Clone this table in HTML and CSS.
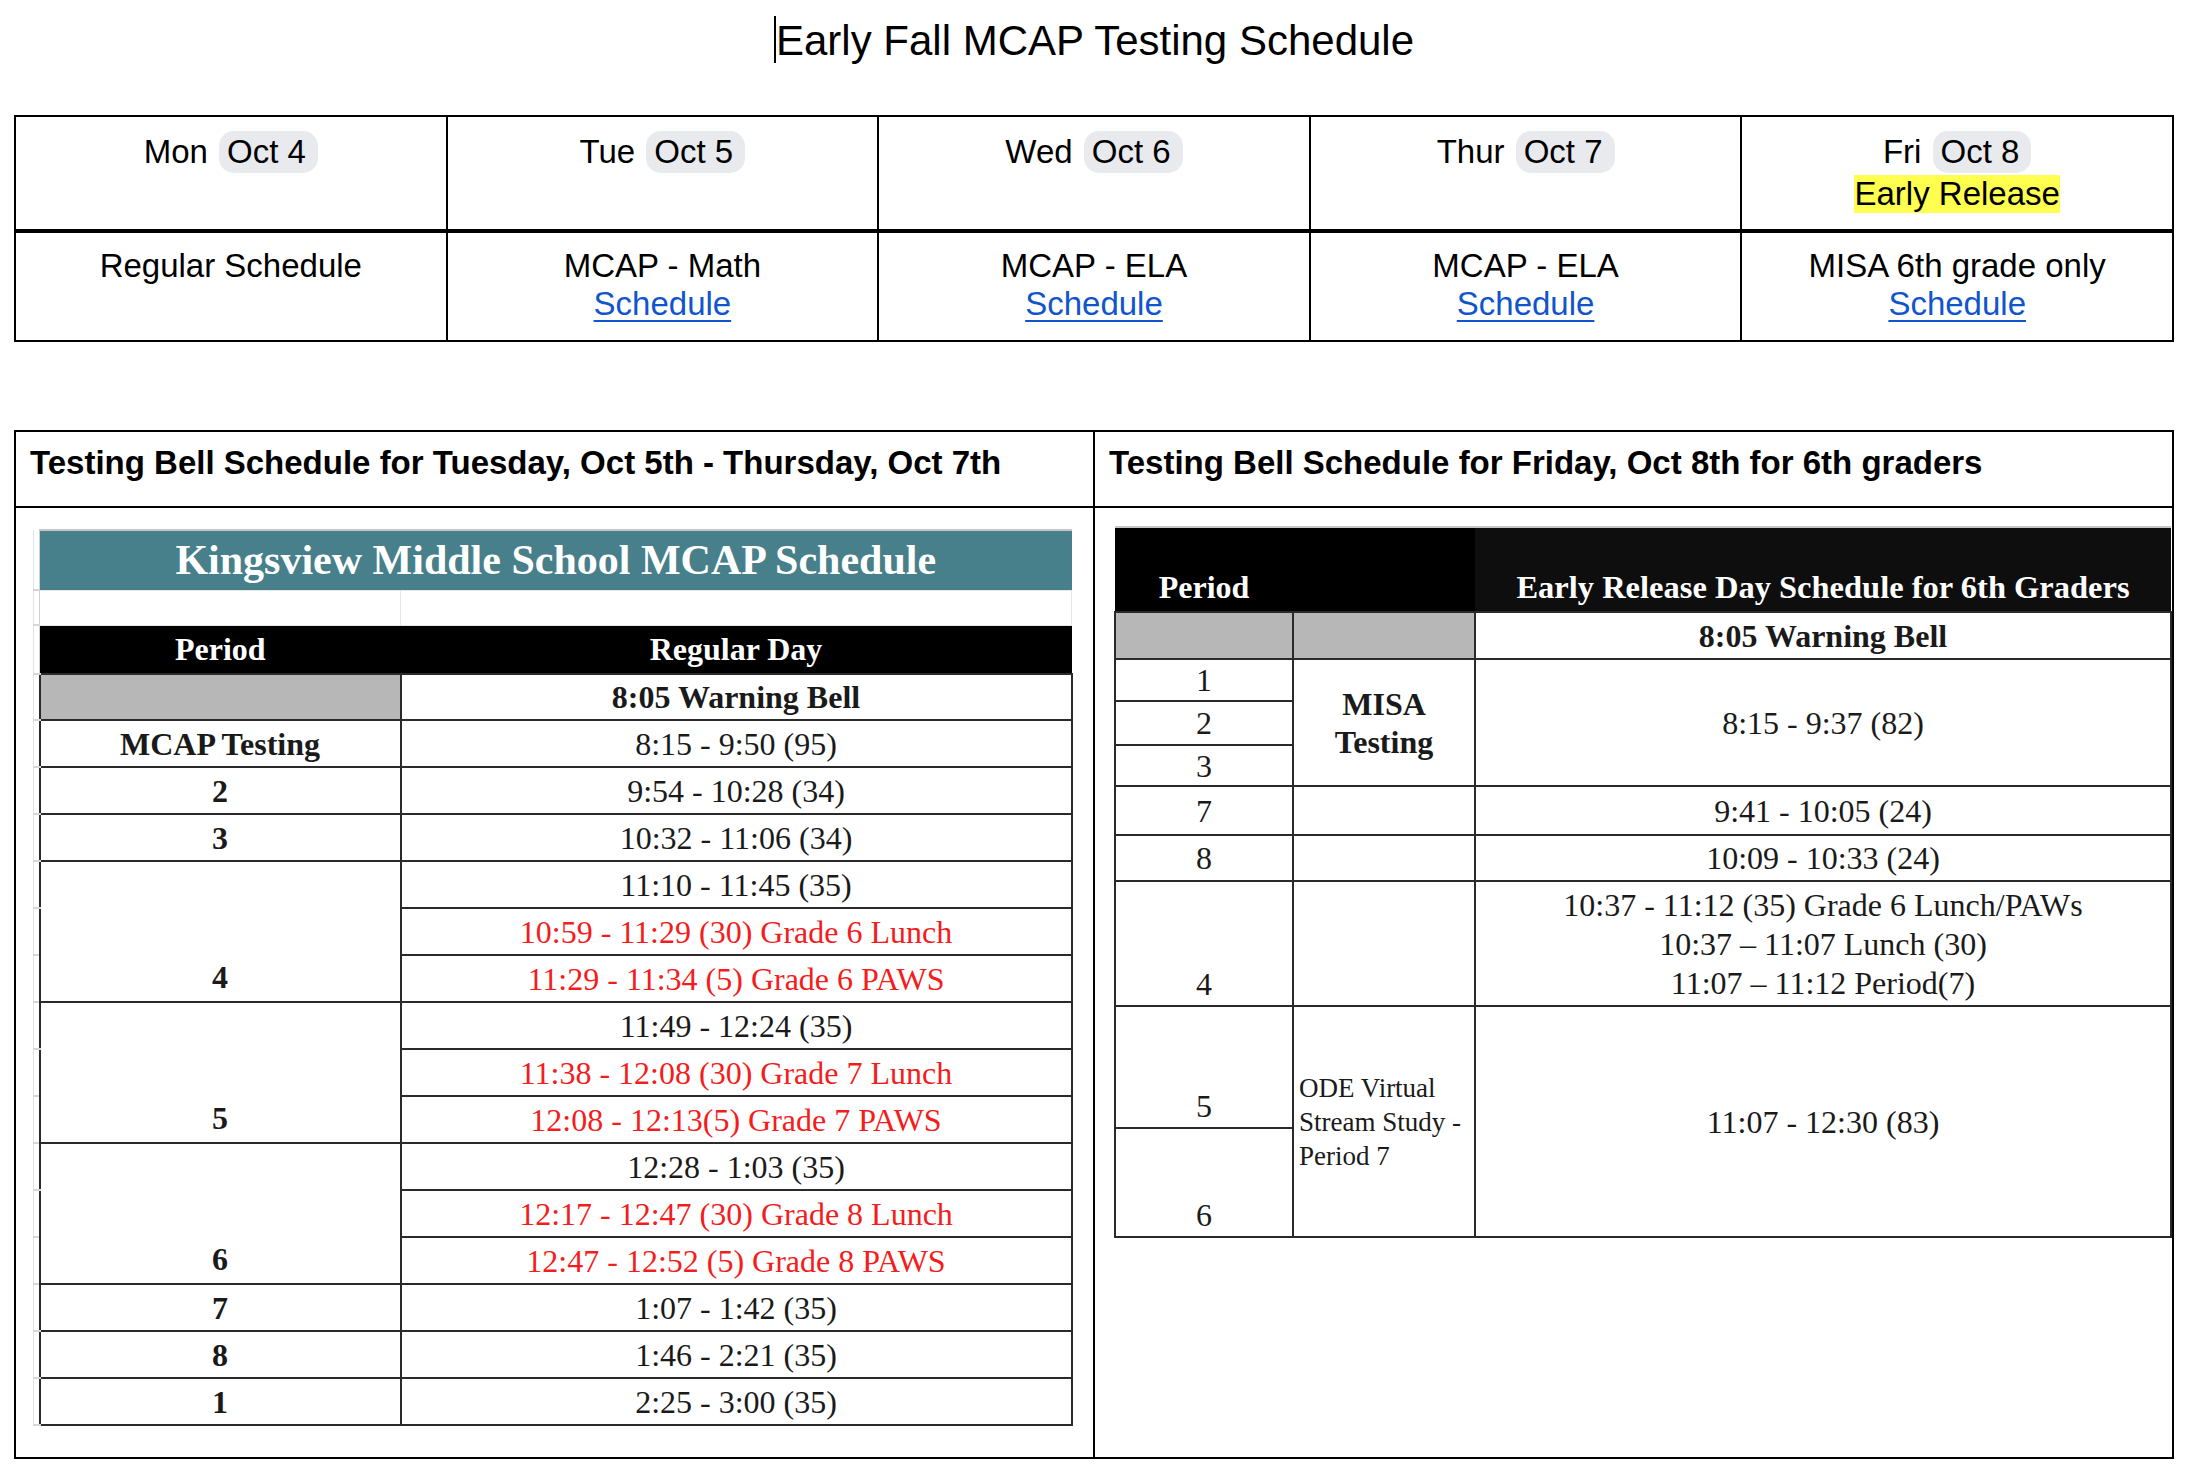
FILE: index.html
```html
<!DOCTYPE html>
<html lang="en">
<head>
<meta charset="utf-8">
<title>Early Fall MCAP Testing Schedule</title>
<link rel="stylesheet" href="styles.css">
</head>
<body>
<div class="page">
  <h1 class="title"><span class="cursor"></span>Early Fall MCAP Testing Schedule</h1>

  <table class="week">
    <colgroup><col><col><col><col><col></colgroup>
    <tr class="days">
      <td>Mon <span class="chip">Oct 4</span></td>
      <td>Tue <span class="chip">Oct 5</span></td>
      <td>Wed <span class="chip">Oct 6</span></td>
      <td>Thur <span class="chip">Oct 7</span></td>
      <td>Fri <span class="chip">Oct 8</span><br><span class="hl">Early Release</span></td>
    </tr>
    <tr class="plans">
      <td>Regular Schedule</td>
      <td>MCAP - Math<br><a href="#" class="link">Schedule</a></td>
      <td>MCAP - ELA<br><a href="#" class="link">Schedule</a></td>
      <td>MCAP - ELA<br><a href="#" class="link">Schedule</a></td>
      <td>MISA 6th grade only<br><a href="#" class="link">Schedule</a></td>
    </tr>
  </table>

  <table class="bells">
    <colgroup><col><col></colgroup>
    <tr class="bells-head">
      <th class="bh">Testing Bell Schedule for Tuesday, Oct 5th - Thursday, Oct 7th</th>
      <th class="bh">Testing Bell Schedule for Friday, Oct 8th for 6th graders</th>
    </tr>
    <tr class="bells-body">
      <td class="left-cell">
        <table class="sheet">
          <colgroup><col class="c-stub"><col class="c-per"><col class="c-time"></colgroup>
          <tr class="s-banner"><td class="stub"></td><td colspan="2" class="banner">Kingsview Middle School MCAP Schedule</td></tr>
          <tr class="s-gap"><td class="stub"></td><td class="gap"></td><td class="gap"></td></tr>
          <tr class="s-head"><td class="stub"></td><th>Period</th><th>Regular Day</th></tr>
          <tr class="s-warn"><td class="stub"></td><td class="shade"></td><td class="b">8:05 Warning Bell</td></tr>
          <tr class="s-row"><td class="stub"></td><td class="b">MCAP Testing</td><td>8:15 - 9:50 (95)</td></tr>
          <tr class="s-row"><td class="stub"></td><td class="b">2</td><td>9:54 - 10:28 (34)</td></tr>
          <tr class="s-row"><td class="stub"></td><td class="b">3</td><td>10:32 - 11:06 (34)</td></tr>
          <tr class="s-row"><td class="stub"></td><td class="b bot" rowspan="3">4</td><td>11:10 - 11:45 (35)</td></tr>
          <tr class="s-row"><td class="stub"></td><td class="red">10:59 - 11:29 (30) Grade 6 Lunch</td></tr>
          <tr class="s-row"><td class="stub"></td><td class="red">11:29 - 11:34 (5) Grade 6 PAWS</td></tr>
          <tr class="s-row"><td class="stub"></td><td class="b bot" rowspan="3">5</td><td>11:49 - 12:24 (35)</td></tr>
          <tr class="s-row"><td class="stub"></td><td class="red">11:38 - 12:08 (30) Grade 7 Lunch</td></tr>
          <tr class="s-row"><td class="stub"></td><td class="red">12:08 - 12:13(5) Grade 7 PAWS</td></tr>
          <tr class="s-row"><td class="stub"></td><td class="b bot" rowspan="3">6</td><td>12:28 - 1:03 (35)</td></tr>
          <tr class="s-row"><td class="stub"></td><td class="red">12:17 - 12:47 (30) Grade 8 Lunch</td></tr>
          <tr class="s-row"><td class="stub"></td><td class="red">12:47 - 12:52 (5) Grade 8 PAWS</td></tr>
          <tr class="s-row"><td class="stub"></td><td class="b">7</td><td>1:07 - 1:42 (35)</td></tr>
          <tr class="s-row"><td class="stub"></td><td class="b">8</td><td>1:46 - 2:21 (35)</td></tr>
          <tr class="s-row"><td class="stub"></td><td class="b">1</td><td>2:25 - 3:00 (35)</td></tr>
        </table>
      </td>
      <td class="right-cell">
        <table class="early">
          <colgroup><col class="e-per"><col class="e-act"><col class="e-time"></colgroup>
          <tr class="e-head"><th class="e-per-h">Period</th><th></th><th class="e-time-h">Early Release Day Schedule for 6th Graders</th></tr>
          <tr class="e-warn"><td class="shade"></td><td class="shade"></td><td class="b">8:05 Warning Bell</td></tr>
          <tr class="e-r1"><td>1</td><td class="b" rowspan="3">MISA<br>Testing</td><td rowspan="3">8:15 - 9:37 (82)</td></tr>
          <tr class="e-r2"><td>2</td></tr>
          <tr class="e-r3"><td>3</td></tr>
          <tr class="e-r7"><td>7</td><td></td><td>9:41 - 10:05 (24)</td></tr>
          <tr class="e-r8"><td>8</td><td></td><td>10:09 - 10:33 (24)</td></tr>
          <tr class="e-r4"><td class="bot">4</td><td></td><td class="multi">10:37 - 11:12 (35) Grade 6 Lunch/PAWs<br>10:37 – 11:07 Lunch (30)<br>11:07 – 11:12 Period(7)</td></tr>
          <tr class="e-r5"><td class="bot">5</td><td class="ode" rowspan="2">ODE Virtual<br>Stream Study -<br>Period 7</td><td rowspan="2">11:07 - 12:30 (83)</td></tr>
          <tr class="e-r6"><td class="bot">6</td></tr>
        </table>
      </td>
    </tr>
  </table>
</div>
</body>
</html>
```
FILE: styles.css
```css
* { box-sizing: border-box; }
html, body { margin: 0; padding: 0; background: #fff; }
body { font-family: "Liberation Sans", Arial, sans-serif; color: #000; }

.page { width: 2196px; padding-left: 14px; }

.title {
  margin: 0;
  width: 2160px;
  height: 115px;
  padding-top: 18px;
  font-size: 42px;
  line-height: 46px;
  font-weight: normal;
  text-align: center;
}
.cursor {
  display: inline-block;
  width: 2px;
  height: 47px;
  margin-top: -2px;
  background: #000;
  vertical-align: top;
}

/* week overview */
.week {
  width: 2160px;
  border-collapse: collapse;
  table-layout: fixed;
}
.week td {
  border: 2px solid #000;
  text-align: center;
  vertical-align: top;
  font-size: 33px;
  line-height: 38px;
  padding: 14px 4px 0;
}
.week .days td { height: 115px; border-bottom-width: 4px; }
.week .plans td { height: 110px; }
.chip {
  display: inline-block;
  background: #e8eaed;
  border-radius: 15px;
  padding: 2px 12px 2px 8px;
  margin-left: 2px;
}
.hl { display: inline-block; margin-top: 2px; background: #ffff4f; }
.link {
  color: #1155cc;
  text-decoration: underline;
  text-decoration-thickness: 2px;
  text-underline-offset: 5px;
}

/* bell schedules */
.bells {
  margin-top: 88px;
  width: 2160px;
  border-collapse: collapse;
  table-layout: fixed;
}
.bh {
  border: 2px solid #000;
  height: 76px;
  padding: 12px 14px 0;
  vertical-align: top;
  text-align: left;
  font-size: 33px;
  line-height: 38px;
  font-weight: bold;
}
.bells-body > td {
  border: 2px solid #000;
  height: 951px;
  vertical-align: top;
  padding: 0;
}
.bells-body > td.left-cell { padding: 21px 0 0 17px; }
.bells-body > td.right-cell { padding: 18px 0 0 19px; }

/* left spreadsheet */
.sheet {
  border-collapse: collapse;
  table-layout: fixed;
  width: 1038px;
  font-family: "Liberation Serif", "Times New Roman", serif;
  font-size: 32px;
  color: #1a1a1a;
}
.c-stub { width: 6px; }
.c-per { width: 361px; }
.c-time { width: 671px; }
.sheet td, .sheet th {
  padding: 0 4px;
  text-align: center;
  vertical-align: middle;
  line-height: 38px;
  white-space: nowrap;
}
.sheet .stub {
  padding: 0;
  border-left: 1px solid #e3e3e3;
  border-right: 1px solid #d0d0d0;
  border-bottom: 2px solid #d6d6d6;
}
.s-banner { height: 60px; }
.sheet .banner {
  background: #477f8b;
  color: #fff;
  font-weight: bold;
  font-size: 42px;
  border-top: 2px solid #c6c6c6;
}
.s-gap { height: 35px; }
.gap { border: 1px solid #e6e6e6; }
.s-head { height: 49px; }
.s-head th { background: #000; color: #fff; font-weight: bold; border: 0; }
.s-warn { height: 46px; }
.s-row { height: 47px; }
.s-warn td:not(.stub), .s-row td:not(.stub) { border: 2px solid #2a2a2a; }
.shade { background: #b7b7b7; }
.b { font-weight: bold; }
.red { color: #f41c1c; }
.sheet .bot { vertical-align: bottom; padding-bottom: 5px; }

/* right table */
.early {
  border-collapse: collapse;
  table-layout: fixed;
  width: 1056px;
  font-family: "Liberation Serif", "Times New Roman", serif;
  font-size: 32px;
  color: #1a1a1a;
}
.e-per { width: 178px; }
.e-act { width: 182px; }
.e-time { width: 696px; }
.early td {
  border: 2px solid #2a2a2a;
  text-align: center;
  vertical-align: middle;
  padding: 0 4px;
  line-height: 38px;
}
.e-head { height: 85px; }
.e-head th {
  background: #000;
  color: #fff;
  font-weight: bold;
  text-align: center;
  vertical-align: bottom;
  padding: 0 4px 5px;
  line-height: 38px;
  border: 0;
  border-top: 2px solid #c6c6c6;
}
.e-head th.e-time-h { background: #0e0e0e; white-space: nowrap; font-size: 32.5px; }
.e-warn { height: 47px; }
.e-r1 { height: 42px; }
.e-r2 { height: 44px; }
.e-r3 { height: 41px; }
.e-r7 { height: 49px; }
.e-r8 { height: 46px; }
.e-r4 { height: 125px; }
.e-r5 { height: 122px; }
.e-r6 { height: 109px; }
.early td.bot { vertical-align: bottom; padding-bottom: 2px; }
.early td.multi { line-height: 39px; padding-top: 2px; }
.early td.ode {
  text-align: left;
  font-size: 27px;
  line-height: 34px;
  padding: 0 4px 0 5px;
  white-space: nowrap;
}
```
